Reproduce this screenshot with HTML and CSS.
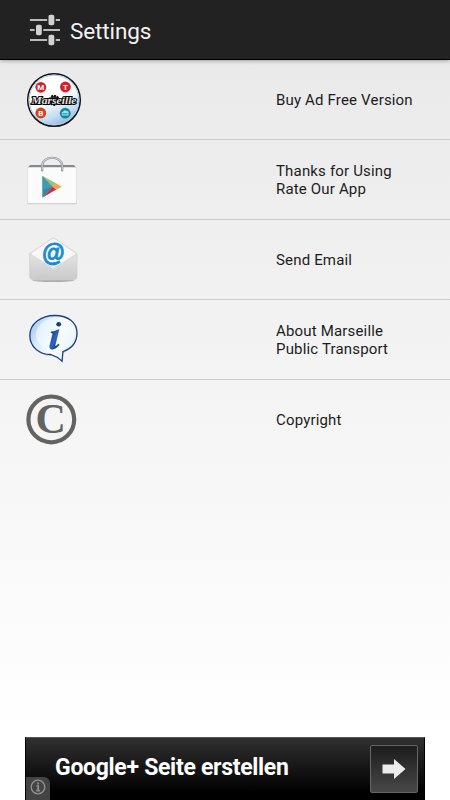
FILE: index.html
```
<!DOCTYPE html>
<html lang="en">
  <head>
    <meta charset="UTF-8" />
    <meta name="viewport" content="width=device-width, initial-scale=1.0" />
    <title>Settings</title>
    <link rel="stylesheet" href="styles.css">
  </head>
  <body>
    <header>
      <svg class="header-icon" width="30" height="32" viewBox="0 0 30 32">
        <path d="M0 5h30M0 15h30M0 25h30" stroke="#bcbcbc" stroke-width="2" />
        <g fill="#d2d2d2" stroke="#222" stroke-width="1.4">
          <rect x="17.8" y="-1" width="7.2" height="12" rx="2.4" />
          <rect x="5.3" y="9" width="7.2" height="12" rx="2.4" />
          <rect x="17.8" y="19" width="7.2" height="12" rx="2.4" />
        </g>
      </svg>
      <h1>Settings</h1>
    </header>

    <ul class="menu">
      <li class="item">
        <svg class="icon" viewBox="0 0 60 79">
          <defs>
            <linearGradient id="ball" x1="0.2" y1="0" x2="0.65" y2="1">
              <stop offset="0.5" stop-color="#fff" />
              <stop offset="0.8" stop-color="#c3dbf2" />
              <stop offset="1" stop-color="#8bb5df" />
            </linearGradient>
          </defs>
          <circle cx="32" cy="40" r="26.3" fill="url(#ball)" stroke="#111" stroke-width="1.5" />
          <circle cx="32" cy="40" r="24.8" fill="none" stroke="#a9cbe6" stroke-width="1" />
          <circle cx="18.8" cy="27.3" r="5.4" fill="#d3202d" />
          <circle cx="43.4" cy="27" r="5.4" fill="#d3202d" />
          <circle cx="18.8" cy="53" r="5.4" fill="#d9401f" />
          <circle cx="43.2" cy="53.2" r="5.4" fill="#12869a" />
          <g class="line-letter">
            <text x="18.8" y="30.2">M</text>
            <text x="43.4" y="29.9">T</text>
            <text x="18.8" y="55.9">B</text>
          </g>
          <path d="M39.7 52.5l3-2.3 3.8 1.4v3.8h-6.6z" fill="#9fe3e6" />
          <path d="M40.5 53.8h5" stroke="#12869a" />
          <circle cx="32.2" cy="40.3" r="4.6" fill="#333" stroke="#111" stroke-width="2" stroke-dasharray="2 1" />
          <text class="city" x="32" y="43.6" textLength="45" lengthAdjust="spacingAndGlyphs">Marseille</text>
        </svg>
        <span class="label">Buy Ad Free Version</span>
      </li>
      <li class="item">
        <svg class="icon" viewBox="0 0 60 79">
          <rect x="5.5" y="27" width="49" height="37.3" rx="1" fill="#c9c9c9" />
          <path d="M8 24.9h44l2.3 3H5.7z" fill="#85888c" />
          <rect x="5.8" y="27.3" width="48.4" height="36" rx="0.8" fill="#fbfbfc" />
          <path d="M20.2 30.5V26c0-11 20-11 20 0v4.5" fill="none" stroke="#85888d" stroke-width="2.2" stroke-linecap="round" />
          <path d="M20.2 30V26c0-11 20-11 20 0v4" fill="none" stroke="#d0d3d7" stroke-width="1.1" stroke-linecap="round" />
          <path d="M20.3 35.7v22l10.6-11z" fill="#348aa6" />
          <path d="M20.3 35.7l14 7.8-3.6 3.2z" fill="#9bc27b" />
          <path d="M20.3 57.7l14-8.1-3.6-3.2z" fill="#c92e4d" />
          <path d="M34.2 43.5l5.5 3.2-5.5 3-3.7-3z" fill="#f5a04c" />
          <path d="M20.3 35.7l10.4 11-10.4 3z" fill="#50a5b6" opacity="0.6" />
        </svg>
        <span class="label">Thanks for Using<br>Rate Our App</span>
      </li>
      <li class="item">
        <svg class="icon" viewBox="0 0 60 79">
          <defs>
            <linearGradient id="paper" x1="0" y1="0" x2="0" y2="1">
              <stop offset="0" stop-color="#f4f4f4" />
              <stop offset="1" stop-color="#c9c9ca" />
            </linearGradient>
          </defs>
          <ellipse cx="31.3" cy="60.2" rx="21" ry="1.8" fill="#aaa" />
          <path d="M7.7 33.5L29 19q2.3-1.8 4.6 0L55 33.5V56q0 4-4 4H11.7q-4 0-4-4z" fill="url(#paper)" stroke="#cfcfcf" stroke-width="0.7" />
          <path d="M8.5 34L29 20q2.3-1.7 4.6 0l20.6 14-22.9 15z" fill="#f7f7f7" />
          <path d="M8 34l20 12.5q3.3 2 6.6 0L54.7 34M9 58.8l20-13q2.3-1.5 4.6 0l20 13" fill="none" stroke="#d2d2d2" stroke-width="0.8" />
          <text class="at" x="30.9" y="40.9">@</text>
        </svg>
        <span class="label">Send Email</span>
      </li>
      <li class="item">
        <svg class="icon" viewBox="0 0 60 79">
          <defs>
            <linearGradient id="bubble" x1="0" y1="0" x2="1" y2="0.5">
              <stop offset="0" stop-color="#8ebcea" />
              <stop offset="0.35" stop-color="#d5eafb" />
              <stop offset="0.7" stop-color="#fff" />
              <stop offset="1" stop-color="#dceefd" />
            </linearGradient>
            <linearGradient id="ink" x1="0" y1="0" x2="1" y2="1">
              <stop offset="0" stop-color="#12225f" />
              <stop offset="0.5" stop-color="#2b68c9" />
              <stop offset="1" stop-color="#10205e" />
            </linearGradient>
          </defs>
          <path d="M33 15.5c13 0 22 7 22 17.5 0 9-5.500 15.500-14 18.500-.6 4-.4 6.500-1 9.600-3.500-3.600-7-5.300-11-6.600C17 54.500 7.800 46.500 7.800 35.500 7.800 23.500 19 15.500 33 15.500z" fill="#777" opacity="0.5" transform="translate(0.3 1.3)" />
          <path d="M33 15.5c13 0 22 7 22 17.500 0 9-5.500 15.500-14 18.500-.6 4-.4 6.500-1 9.600-3.500-3.600-7-5.300-11-6.600C17 54.500 7.800 46.500 7.800 35.500 7.800 23.500 19 15.500 33 15.500z" fill="url(#bubble)" stroke="#1c3f80" stroke-width="1.3" />
          <path d="M34 18c11 0 18.500 6 18.500 15.500S45 51 34 51 14 44 14 35 23 18 34 18z" fill="#f3faff" opacity="0.65" />
          <ellipse cx="36.7" cy="24.2" rx="2.4" ry="2.2" fill="#173684" />
          <path d="M29.2 31.800c3-.2 5-.9 7.700-2.200l-3.800 15.500c-.4 1.600.8 1.300 3.300-1.200l.8.900c-3 4.400-10.200 6.800-9.400 1.200l2.900-11.700c.3-1-.3-1.500-1.700-1.500z" fill="url(#ink)" stroke="#173684" stroke-width="0.5" />
        </svg>
        <span class="label">About Marseille<br>Public Transport</span>
      </li>
      <li class="item">
        <svg class="icon" viewBox="0 0 60 79">
          <circle cx="29.3" cy="39.4" r="22.9" fill="none" stroke="#636361" stroke-width="4.2" />
          <text class="copy" x="28.6" y="53.3">C</text>
        </svg>
        <span class="label">Copyright</span>
      </li>
    </ul>

    <footer class="ad">
      <span class="ad-info">
        <svg width="16" height="16" viewBox="0 0 16 16">
          <circle cx="8" cy="8" r="6.8" fill="none" stroke="#929292" stroke-width="1.3" />
          <path d="M8 3.6v2M6.5 7h1.700v4.500M6.300 11.600h3.600" fill="none" stroke="#929292" stroke-width="1.7" />
        </svg>
      </span>
      <span class="ad-text">Google+ Seite erstellen</span>
      <span class="ad-button">
        <svg width="24" height="22" viewBox="0 0 24 22">
          <path d="M0.5 6.5h11.500V1l11.500 10L12 21v-5.500H0.500z" fill="#ececec" />
        </svg>
      </span>
    </footer>
  </body>
</html>
```
FILE: styles.css
```
* {
  box-sizing: border-box;
}

body {
  margin: 0;
  height: 800px;
  font-family: Roboto, sans-serif;
  background: linear-gradient(#e8e8e8, #fff 92%);
  color: #1c1c1c;
  display: flex;
  flex-direction: column;
  overflow: hidden;
}

header {
  height: 60px;
  flex-shrink: 0;
  display: flex;
  align-items: center;
  gap: 10px;
  padding: 2px 30px 0;
  background: #222;
  border-bottom: 1px solid #000;
  box-shadow: 0 1px 4px rgba(0, 0, 0, 0.3);
}

.header-icon {
  overflow: visible;
}

h1 {
  margin: 0;
  font-size: 22.5px;
  font-weight: 400;
  line-height: 28px;
  letter-spacing: -0.1px;
  color: #f3f3f3;
}

.menu {
  list-style: none;
  margin: 0;
  padding: 0;
}

.item {
  display: flex;
  align-items: center;
  height: 80px;
  padding-left: 22px;
  border-bottom: 1px solid #cbcbcb;
}

.item:last-child {
  border-bottom-color: transparent;
}

.icon {
  width: 60px;
  height: 79px;
  margin-right: 194px;
  flex-shrink: 0;
}

.label {
  font-size: 15px;
  line-height: 17.5px;
  letter-spacing: 0.17px;
  white-space: nowrap;
  padding-top: 2px;
}

.line-letter {
  font: bold 8px Roboto, sans-serif;
  fill: #fff;
  text-anchor: middle;
}

.city {
  font: italic bold 10px "Liberation Serif", serif;
  text-anchor: middle;
  fill: #e4e4e4;
  stroke: #000;
  stroke-width: 1.8px;
  paint-order: stroke;
}

.at {
  font: italic bold 23px "Liberation Sans", sans-serif;
  text-anchor: middle;
  fill: #178bd3;
  stroke: #178bd3;
  stroke-width: 0.9px;
}

.copy {
  font: bold 42px "Liberation Serif", serif;
  text-anchor: middle;
  fill: #636361;
}

.ad {
  position: relative;
  display: flex;
  align-items: center;
  justify-content: space-between;
  width: 400px;
  height: 63px;
  margin: auto auto 0;
  padding: 0 6px 0 29px;
  border: 1px solid #000;
  border-top-color: #555;
  border-bottom: 0;
  background: linear-gradient(#303030, #000 88%);
}

.ad-text {
  font-size: 23px;
  font-weight: 700;
  letter-spacing: -0.3px;
  color: #fff;
  white-space: nowrap;
  padding-bottom: 3px;
}

.ad-button {
  display: flex;
  align-items: center;
  justify-content: center;
  width: 48px;
  height: 48px;
  border: 1px solid #666;
  border-radius: 2px;
  background: linear-gradient(#1c1c1c, #484848);
}

.ad-info {
  position: absolute;
  left: 0;
  bottom: 0;
  width: 24px;
  height: 23px;
  padding: 2px 4px;
  border-top-right-radius: 6px;
  background: #444;
}

.ad-info svg {
  display: block;
}
```
